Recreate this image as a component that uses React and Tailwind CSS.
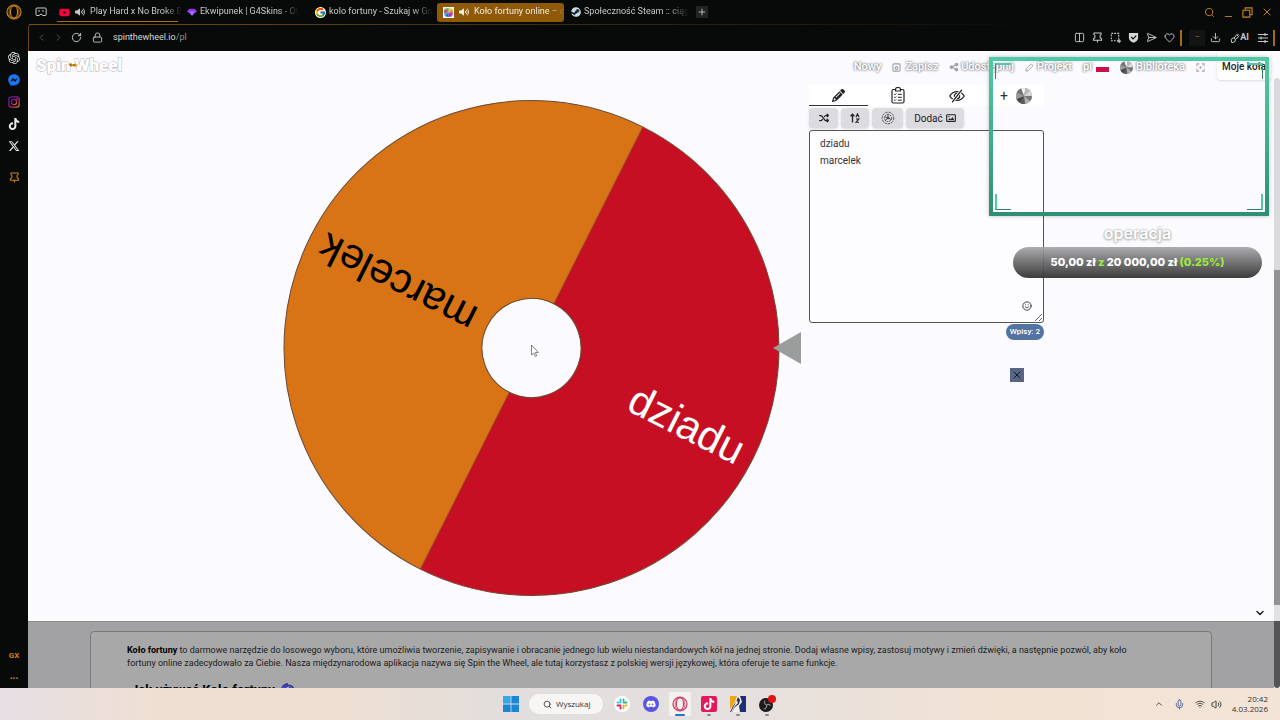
import React, { useState } from 'react';
import {
  Heart,
  Download,
  Search,
  X,
  Minus,
  Plus,
  Lock,
  RotateCw,
  ChevronLeft,
  ChevronRight,
  ChevronUp,
  ChevronDown,
  Columns2,
  Mic,
  Wifi,
  Volume2,
  SendHorizontal,
  Smile,
} from 'lucide-react';
import { FaTiktok, FaXTwitter, FaDiscord, FaSteam, FaYoutube, FaFacebookMessenger, FaPencil, FaShuffle, FaVolumeHigh, FaShareNodes } from 'react-icons/fa6';
import { SiOpenai } from 'react-icons/si';
import { FcGoogle } from 'react-icons/fc';

const OperaRing = ({ className }) => (
  <svg viewBox="0 0 16 16" className={className} fill="none" stroke="currentColor">
    <circle cx="8" cy="8" r="7" strokeWidth="1.2" />
    <ellipse cx="8" cy="8" rx="3.6" ry="6" strokeWidth="1.2" />
    <ellipse cx="8" cy="8" rx="5" ry="6.8" strokeWidth="0.7" />
  </svg>
);

const GxCorner = () => (
  <svg viewBox="0 0 12 10" className="w-3 h-2.5" fill="none" stroke="#c8c8c8" strokeWidth="1">
    <path d="M2 1h8.200a1 1 0 0 1 1 1v5.500a1 1 0 0 1-1 1H8L6 7 4 8.500H2a1 1 0 0 1-1-1V2a1 1 0 0 1 1-1z" />
    <path d="M3 4h2M7 4h2" />
  </svg>
);

const PinIcon = ({ className }) => (
  <svg viewBox="0 0 12 12" className={className} fill="none" stroke="currentColor" strokeWidth="1.1" strokeLinejoin="round">
    <path d="M2 1h8v1.500L8.800 4v2L10.500 7.500V9h-9V7.500L3.200 6V4L2 2.500zM6 9v2.500" />
  </svg>
);

const ShieldIcon = () => (
  <svg viewBox="0 0 12 12" className="w-[11px] h-[11px]">
    <path d="M1 1h10v5.500c0 2.500-2.500 4.200-5 5.200C3.500 10.700 1 9 1 6.500z" fill="#d6d6d6" />
    <path d="M3.500 5.500l2 2 3.500-3.500" fill="none" stroke="#080a0a" strokeWidth="1.300" />
  </svg>
);

const SnapshotIcon = () => (
  <svg viewBox="0 0 12 12" className="w-[11px] h-[11px]" fill="none" stroke="currentColor" strokeWidth="1.200">
    <path d="M1.500 1.500h8v8h-8z" strokeDasharray="2 1.200" />
    <path d="M8 10h4M10 8v4" />
  </svg>
);

const InstagramIcon = () => (
  <svg viewBox="0 0 14 14" className="w-3 h-3" fill="none" stroke="url(#ig)" strokeWidth="1.400">
    <defs>
      <linearGradient id="ig" x1="0" y1="0" x2="1" y2="1">
        <stop offset="0" stopColor="#5a1fa8" />
        <stop offset="0.6" stopColor="#b01a6a" />
        <stop offset="1" stopColor="#d08a20" />
      </linearGradient>
    </defs>
    <rect x="1" y="1" width="12" height="12" rx="3" />
    <circle cx="7" cy="7" r="3" />
    <circle cx="10.300" cy="3.700" r="0.400" />
  </svg>
);

const GemIcon = () => (
  <svg viewBox="0 0 12 10" className="w-2.5 h-2.5">
    <path d="M0 4l3-3h6l3 3-6 5.500z" fill="#8b3df0" />
    <path d="M3 4h6L6 9.500z" fill="#b06bff" />
  </svg>
);

const PinwheelFavicon = () => (
  <svg viewBox="0 0 12 12" className="w-[11px] h-[11px]">
    <rect width="12" height="12" fill="#fff" />
    <path d="M6 6V1l4 1z" fill="#f6c915" />
    <path d="M6 6l4-4 1 4z" fill="#f58a1f" />
    <path d="M6 6h5l-1 4z" fill="#e0218a" />
    <path d="M6 6l4 4-4 1z" fill="#7b2fd0" />
    <path d="M6 6v5l-4-1z" fill="#2a5be0" />
    <path d="M6 6l-4 4-1-4z" fill="#19a7d8" />
    <path d="M6 6H1l1-4z" fill="#e8234a" />
    <path d="M6 6L2 2l4-1z" fill="#3fb84a" />
  </svg>
);

const MiniWheel = ({ className }) => (
  <svg viewBox="0 0 16 16" className={className}>
    <circle cx="8" cy="8" r="8" fill="#8d8d8d" />
    <path d="M8 8L5 .6A8 8 0 0 1 9.500.200z" fill="#f4f4f4" />
    <path d="M8 8L9.500.200a8 8 0 0 1 4.500 2.500z" fill="#b9b9b9" />
    <path d="M8 8l6-5.300a8 8 0 0 1 2 5z" fill="#dcdcdc" />
    <path d="M8 8h8a8 8 0 0 1-2 5.300z" fill="#777" />
    <path d="M8 8l6 5.300A8 8 0 0 1 9 16z" fill="#b0b0b0" />
    <path d="M8 8l1 8a8 8 0 0 1-5-1z" fill="#5c5c5c" />
    <path d="M8 8l-4 7a8 8 0 0 1-3.500-4z" fill="#444" />
    <path d="M8 8L.5 11A8 8 0 0 1 .8 4.500z" fill="#9a9a9a" />
    <path d="M8 8L.8 4.500A8 8 0 0 1 5 .6z" fill="#737373" />
  </svg>
);

const ClipboardList = () => (
  <svg viewBox="0 0 14 17" className="w-3.5 h-[17px]" fill="none" stroke="#222" strokeWidth="1.200">
    <rect x="1" y="2.500" width="12" height="13.500" rx="1.500" />
    <path d="M4.500 4V2.500a2.500 2 0 0 1 5 0V4z" fill="#fff" />
    <path d="M3.200 7l.8.8 1.200-1.300M3.200 10l.8.8 1.200-1.300M3.200 13l.8.6 1.200-1.200M6.800 7.300h4M6.800 10.300h4M6.800 13.200h4" strokeWidth="1" />
  </svg>
);

const EyeSlash = () => (
  <svg viewBox="0 0 16 14" className="w-4 h-3.5" fill="none" stroke="#222" strokeWidth="1.300" strokeLinecap="round">
    <path d="M.8 7C2.500 4 5 2.600 8 2.600S13.500 4 15.200 7C13.500 10 11 11.400 8 11.400S2.500 10 .8 7z" />
    <circle cx="8" cy="7" r="2.600" />
    <path d="M3.500 12.800L12.500 1.200" stroke="#fff" strokeWidth="3" />
    <path d="M3.500 12.800L12.500 1.200" />
  </svg>
);

const SortIcon = () => (
  <svg viewBox="0 0 10 10" className="w-2.5 h-2.5" fill="none" stroke="#222" strokeWidth="1.300">
    <path d="M2.500 9.500V1.500M.6 3.200l1.900-2 1.900 2" />
    <path d="M6 4.200L7.500.8 9 4.200M6 6h3L6 9.200h3" strokeWidth="1.100" />
  </svg>
);

const SpiralIcon = () => (
  <svg viewBox="0 0 14 14" className="w-3.5 h-3.5" fill="none" stroke="#444" strokeWidth="0.900">
    <circle cx="7" cy="7" r="5.800" strokeDasharray="2.400 1" />
    <circle cx="7" cy="7" r="3.600" strokeDasharray="1.800 0.800" />
    <path d="M7 7V3M7 7l3.500 1.500M7 7l-3 2.500M7 7L3.500 5.500" />
    <circle cx="7" cy="7" r="1" fill="#444" />
  </svg>
);

const ImageIcon = () => (
  <svg viewBox="0 0 12 10" className="w-2.5 h-2.5" fill="none" stroke="#222" strokeWidth="1.300">
    <rect x="0.800" y="1" width="10.400" height="8" rx="0.800" />
    <path d="M2.500 7.500l2-2.300 1.300 1.200 2-2.600 2 3.700z" fill="#222" stroke="none" />
    <circle cx="3.500" cy="3.400" r="0.800" fill="#222" stroke="none" />
  </svg>
);

const SlackIcon = () => (
  <svg viewBox="0 0 16 16" className="w-4 h-4">
    <circle cx="8" cy="8" r="8" fill="#fff" />
    <g fill="none" strokeWidth="1.900" strokeLinecap="round">
      <path d="M6.500 3.500v3M3.500 6.500h1" stroke="#36c5f0" />
      <path d="M9.500 6.500h3M9.500 3.500v1" stroke="#2eb67d" />
      <path d="M9.500 9.500v3M11.500 9.500h1" stroke="#ecb22e" />
      <path d="M3.500 9.500h3M6.500 11.500v1" stroke="#e01e5a" />
    </g>
  </svg>
);

const AnvilIcon = () => (
  <svg viewBox="0 0 16 16" className="w-4 h-4">
    <rect width="16" height="16" fill="#f4efe6" />
    <path d="M0 0h7L5 6l-4 6-1 1z" fill="#e8a818" />
    <path d="M10 0h6v16h-6l-1-6 3-4z" fill="#1e2f7a" />
    <path d="M8 1l2 3-1 4-4 3-3 5H0l3-6 3-4z" fill="#26264a" />
    <path d="M7 4l1 3-3 3-3 6H1l3-6z" fill="#f4efe6" />
  </svg>
);

const ObsIcon = () => (
  <svg viewBox="0 0 16 16" className="w-4 h-4 overflow-visible">
    <circle cx="7" cy="9" r="7" fill="#1c1a1b" />
    <g fill="none" stroke="#8a8788" strokeWidth="1.200">
      <path d="M6 4.500a3 3 0 0 0 1.500 4.500M11.500 9.500a3 3 0 0 0-4-.5M4.500 13a3 3 0 0 0 3-4" />
    </g>
    <circle cx="13" cy="3" r="4" fill="#e01212" />
  </svg>
);

const tabs = [
  { id: 1, label: 'Play Hard x No Broke B', icon: <FaYoutube className="w-[11px] h-[11px] text-[#f0063a]" />, audio: true, underlined: true },
  { id: 2, label: 'Ekwipunek | G4Skins - Ot', icon: <GemIcon /> },
  { id: 3, label: 'kolo fortuny - Szukaj w Go', icon: <FcGoogle className="w-[11px] h-[11px] rounded-full bg-white" /> },
  { id: 4, label: 'Koło fortuny online – d', icon: <PinwheelFavicon />, audio: true, active: true },
  { id: 5, label: 'Społeczność Steam :: ciąg', icon: <FaSteam className="w-2.5 h-2.5 text-[#c5dcec]" /> },
];

const TabBar = () => (
  <div className="h-6 shrink-0 flex items-center pl-[7px]">
    <GxCorner />
    <div className="flex items-center gap-px h-full ml-1.5">
      {tabs.map((tab) => (
        <button
          key={tab.id}
          className={`relative flex items-center gap-[3px] w-[127px] h-[19px] px-1.5 rounded-[3px] text-[9px] whitespace-nowrap ${
            tab.active ? 'bg-[#8f5a08] text-[#f3ece0]' : 'text-[#c9c9c9]'
          }`}
        >
          <span className="shrink-0">{tab.icon}</span>
          {tab.audio && <FaVolumeHigh className="w-2.5 h-2.5 mx-0.5 shrink-0" />}
          <span className="[mask-image:linear-gradient(to_right,black_80%,transparent)]">{tab.label}</span>
          {tab.underlined && <span className="absolute left-1 right-0.5 bottom-0 h-px bg-[#a86c18]" />}
        </button>
      ))}
    </div>
    <button className="ml-1 w-3 h-3 bg-[#222424] flex items-center justify-center" aria-label="Nowa karta">
      <Plus className="w-2.5 h-2.5 text-[#d0d0d0]" />
    </button>
    <div className="ml-auto flex items-center gap-2 pr-[7px] text-[#c98519]">
      <button aria-label="Szukaj"><Search className="w-[11px] h-[11px]" /></button>
      <button aria-label="Minimalizuj"><Minus className="w-[11px] h-[11px] mt-2" /></button>
      <button aria-label="Przywróć">
        <svg viewBox="0 0 12 12" className="w-[11px] h-[11px]" fill="none" stroke="currentColor" strokeWidth="1.200">
          <path d="M1 3.500h7.500V11H1zM3.500 3.500V1H11v7.500H8.500" />
        </svg>
      </button>
      <button aria-label="Zamknij"><X className="w-3 h-3" /></button>
    </div>
  </div>
);

const AddressBar = () => (
  <div className="relative h-[27px] shrink-0 flex items-center pl-[7px] rounded-tl-sm border-l border-[#6b4714]">
    <div className="absolute top-0 left-0 right-0 h-px bg-linear-to-r from-[#7a5014] to-transparent to-80%" />
    <div className="flex items-center gap-1.5 text-[#555]">
      <ChevronLeft className="w-[11px] h-[11px]" />
      <ChevronRight className="w-[11px] h-[11px]" />
      <RotateCw className="w-[11px] h-[11px] ml-px text-[#d0d0d0]" />
      <Lock className="w-[11px] h-[11px] ml-1 text-[#c0c0c0]" />
    </div>
    <span className="ml-2.5 text-[9px] text-[#d8d8d8]">
      spinthewheel.io<span className="text-[#8f8f8f]">/pl</span>
    </span>
    <div className="ml-auto flex items-center gap-[7px] text-[#c8c8c8]">
      <Columns2 className="w-[11px] h-[11px]" />
      <PinIcon className="w-[11px] h-[11px]" />
      <SnapshotIcon />
      <ShieldIcon />
      <SendHorizontal className="w-[11px] h-[11px]" />
      <Heart className="w-[11px] h-[11px]" />
      <span className="w-0.5 h-4 -ml-0.5 bg-[#a86c18]" />
      <span className="w-4 h-4 bg-[#111314] text-[#c98519] text-[7px] flex items-center justify-center">--</span>
      <Download className="w-[11px] h-[11px] -ml-0.5" />
      <span className="flex items-center ml-0.5 text-[9px] font-bold">
        <svg viewBox="0 0 12 12" className="w-2.5 h-2.5" fill="none" stroke="currentColor" strokeWidth="1.200">
          <path d="M1.500 8a2.500 2.500 0 1 1 3 3l-2.500.5zM5 6l3-4 2.500 2.500-4 3M9 1l2 2" />
        </svg>
        AI
      </span>
      <svg viewBox="0 0 10 10" className="w-2.5 h-2.5 ml-0.5" fill="none" stroke="currentColor" strokeWidth="1.100">
        <path d="M0 1.500h10M0 5h10M0 8.500h10M7 0v3M3 3.500v3M7 7v3" />
      </svg>
      <span className="w-0.5 h-4 mr-[5px] -ml-0.5 bg-[#a86c18]" />
    </div>
  </div>
);

const SideBar = () => (
  <aside className="w-7 shrink-0 flex flex-col items-center pt-1 pb-1">
    <OperaRing className="w-4 h-4 text-[#c98519]" />
    <div className="flex flex-col items-center gap-2.5 mt-8 text-[#e8e8e8]">
      <SiOpenai className="w-3 h-3" />
      <FaFacebookMessenger className="w-3 h-3 text-[#1877f2]" />
      <InstagramIcon />
      <FaTiktok className="w-3 h-3" />
      <FaXTwitter className="w-3 h-3" />
      <PinIcon className="w-[11px] h-[11px] mt-2.5 text-[#c98519]" />
    </div>
    <span className="mt-auto text-[8px] font-bold leading-4 text-[#c98519]">GX</span>
    <span className="text-[10px] font-bold leading-4 mt-1 text-[#c98519]">...</span>
  </aside>
);

const SiteHeader = () => (
  <header className="h-[34px] shrink-0 flex items-start pl-2">
    <a
      href="#"
      className="relative mt-0.5 text-[17px] leading-6 font-black text-white [paint-order:stroke_fill] [-webkit-text-stroke:1px_#b4b4b8]"
    >
      Spin Wheel
      <svg viewBox="0 0 10 5" className="absolute left-8 top-2.5 w-2.5 h-[5px]">
        <path d="M0 1l3-1 2 1.500 2-1 3 1.500-3 2-2-1-2 1z" fill="#d99a1e" />
        <path d="M2 2h1.500M5 2h1.500" stroke="#4a3510" strokeWidth="1" />
      </svg>
    </a>
    <nav className="ml-auto mt-1 mr-3 h-6 flex items-center gap-[11px] text-[11px] font-medium text-white [text-shadow:0_0_2px_#777,0_0_3px_#888]">
      <a href="#">Nowy</a>
      <a href="#" className="flex items-center gap-1">
        <svg viewBox="0 0 10 10" className="w-[9px] h-[9px]" fill="none" stroke="#a0a0a4" strokeWidth="1.200">
          <rect x="1" y="1" width="8" height="8" rx="1" />
          <circle cx="5" cy="5.500" r="1.500" />
        </svg>
        Zapisz
      </a>
      <a href="#" className="flex items-center gap-0.5">
        <FaShareNodes className="w-2.5 h-2.5 text-[#a0a0a4]" />
        Udostępnij
      </a>
      <a href="#" className="flex items-center gap-[3px]">
        <svg viewBox="0 0 10 10" className="w-[9px] h-[9px]" fill="#fff" stroke="#a0a0a4" strokeWidth="1.100">
          <path d="M1 9l.6-2.700L7 1l2 2-5.300 5.400z" />
        </svg>
        Projekt
      </a>
      <a href="#" className="flex items-center gap-1">
        pl
        <span className="w-[13px] h-2.5 flex flex-col">
          <span className="flex-1 bg-white" />
          <span className="flex-1 bg-[#c8104a]" />
        </span>
      </a>
      <a href="#" className="flex items-center gap-[3px]">
        <MiniWheel className="w-[13px] h-[13px]" />
        Biblioteka
      </a>
      <svg viewBox="0 0 10 10" className="w-[9px] h-[9px]" fill="none" stroke="#a8a8ac" strokeWidth="1.200">
        <path d="M1 3.500V1h2.500M6.500 1H9v2.500M9 6.500V9H6.500M3.500 9H1V6.500M3.500 5h3M5 3.500v3" />
      </svg>
    </nav>
    <button className="w-[54px] h-[29px] mr-[3px] pt-[3px] rounded-sm bg-white text-[10px] leading-6 font-medium text-[#222] whitespace-nowrap shadow">
      Moje koła
    </button>
  </header>
);

// everything on the wheel is measured from its centre
const Wheel = () => (
  <svg viewBox="0 0 520 500" className="w-[520px] h-[500px] shrink-0">
    <g transform="translate(248.500 250) rotate(26.700)">
      <path d="M0-247.500A247.500 247.500 0 0 1 0 247.500z" fill="#c70f24" />
      <path d="M0 247.500A247.500 247.500 0 0 1 0-247.500z" fill="#d97416" />
      <path d="M0-247.500V247.500" stroke="#8a4a1c" strokeWidth="0.800" />
      <circle r="247.500" fill="none" stroke="#6b4a32" strokeWidth="1" />
      <text x="235" y="13" textAnchor="end" fill="#fff" fontSize="42" fontFamily="Liberation Sans, Arial, sans-serif">dziadu</text>
      <text x="234" y="12" textAnchor="end" fill="#000" fontSize="42" fontFamily="Liberation Sans, Arial, sans-serif" transform="rotate(180)">marcelek</text>
      <circle r="49.500" fill="#fafaff" stroke="#6b4a32" strokeWidth="1" />
    </g>
    <path d="M490 250l28-16v32z" fill="#9b9d9d" />
    <path d="M248.500 247v10l2.300-2 1.500 3.500 1.500-.7-1.500-3.300h3z" fill="#fff" stroke="#666" strokeWidth="0.800" />
  </svg>
);

const EntriesPanel = () => {
  const [entries, setEntries] = useState('dziadu\nmarcelek');

  return (
    <section className="w-[235px] shrink-0 flex flex-col">
      <div className="flex h-[21px] bg-white">
        <button className="w-[59px] flex items-center justify-center border-b border-[#333]" aria-label="Wpisy">
          <FaPencil className="w-[13px] h-[13px] text-[#222]" />
        </button>
        <button className="w-[59px] flex items-center justify-center" aria-label="Wyniki">
          <ClipboardList />
        </button>
        <button className="w-[59px] flex items-center justify-center" aria-label="Ukryj">
          <EyeSlash />
        </button>
        <button className="w-5 ml-2 flex items-center justify-center text-[14px] leading-5 text-[#333]" aria-label="Dodaj koło">+</button>
        <MiniWheel className="w-4 h-4 mt-[3px] ml-0.5" />
      </div>
      <div className="flex gap-[3px] h-5 mt-0.5 text-[10px] text-[#222]">
        <button className="w-[29px] flex items-center justify-center rounded-sm bg-[#dcdce0] shadow-sm" aria-label="Przetasuj">
          <FaShuffle className="w-2.5 h-2.5" />
        </button>
        <button className="w-7 flex items-center justify-center rounded-sm bg-[#dcdce0] shadow-sm" aria-label="Sortuj">
          <SortIcon />
        </button>
        <button className="w-[31px] flex items-center justify-center rounded-sm bg-[#dcdce0] shadow-sm" aria-label="Efekty">
          <SpiralIcon />
        </button>
        <button className="w-[58px] flex items-center justify-center gap-[3px] rounded-sm bg-[#dcdce0] shadow-sm">
          Dodać
          <ImageIcon />
        </button>
      </div>
      <div className="relative mt-0.5">
        <textarea
          aria-label="Lista wpisów"
          spellCheck="false"
          value={entries}
          onChange={(e) => setEntries(e.target.value)}
          className="block w-full h-[193px] px-2.5 py-1 rounded-[3px] border border-[#555] bg-[#fdfdff] text-[10px] leading-[17px] text-[#333] outline-none"
        />
        <button className="absolute right-3 bottom-3 text-[#222]" aria-label="Emoji">
          <Smile className="block w-2.5 h-2.5" />
        </button>
      </div>
      <span className="self-end mt-px h-4 px-1 rounded-full bg-[#5473a3] text-[8px] leading-4 font-medium text-white">
        Wpisy: {entries.split('\n').length}
      </span>
      <button className="self-end mt-7 mr-5 w-3.5 h-3.5 bg-[#566683] flex items-center justify-center" aria-label="Zamknij reklamę">
        <X className="w-3 h-3 text-[#101828]" />
      </button>
    </section>
  );
};

// stream overlay: camera frame and the donation goal
const StreamOverlay = () => (
  <>
    <div className="absolute right-[11px] top-1.5 w-[280px] h-[159px] border-4 [border-image:linear-gradient(#4fcaa6,#3fae8e,#2f8f75)_1] shadow-[0_0_4px_rgba(0,0,0,0.25)] pointer-events-none">
      <span className="absolute left-0.5 top-0.5 w-4 h-4 border-l border-t-2 border-l-[#2f8169] border-t-[#4fcaa6]" />
      <span className="absolute right-0.5 top-0.5 w-4 h-4 border-r border-t-2 border-r-[#2f8169] border-t-[#4fcaa6]" />
      <span className="absolute left-0.5 bottom-0.5 w-4 h-4 border-l-2 border-b border-l-[#4fcaa6] border-b-[#2f8169]" />
      <span className="absolute right-0.5 bottom-0.5 w-4 h-4 border-r-2 border-b border-r-[#4fcaa6] border-b-[#2f8169]" />
    </div>
    <div className="absolute right-[18px] top-[172px] w-[249px] flex flex-col text-center font-['Inter',sans-serif]">
      <span className="text-[16px] leading-5 font-semibold text-white [text-shadow:0_0_2px_#999,0_1px_3px_#aaa]">operacja</span>
      <div className="mt-1 h-[31px] rounded-full bg-linear-to-b from-[#a5a5a7]/90 to-[#333]/95 text-[11px] leading-[31px] font-extrabold text-white whitespace-nowrap">
        50,00 zł <span className="text-[#9be93a]">z</span> 20 000,00 zł <span className="text-[#9be93a]">(0.25%)</span>
      </div>
    </div>
  </>
);

const Article = () => (
  <article className="h-[67px] shrink-0 overflow-hidden bg-[#a2a2a4] border-t border-[#8c8c8e] pt-[9px] pl-[62px] pr-[62px]">
    <div className="h-24 rounded-sm border border-[#7a7a7a] bg-[#a8a8a8] pl-9 pr-16 pt-3 text-[9px] leading-[13px] text-[#1c1c1c]">
      <p>
        <b className="text-black">Koło fortuny</b> to darmowe narzędzie do losowego wyboru, które umożliwia tworzenie, zapisywanie i obracanie jednego lub wielu niestandardowych kół na jednej stronie. Dodaj własne wpisy, zastosuj motywy i zmień dźwięki, a następnie pozwól, aby koło fortuny online zadecydowało za Ciebie. Nasza międzynarodowa aplikacja nazywa się Spin the Wheel, ale tutaj korzystasz z polskiej wersji językowej, która oferuje te same funkcje.
      </p>
      <h2 className="mt-3 pl-1 flex items-center gap-1.5 text-[13px] leading-4 font-bold text-black">
        Jak używać Koło fortuny
        <svg viewBox="0 0 14 14" className="w-3.5 h-3.5" fill="none" stroke="#3a36b0" strokeWidth="2">
          <path d="M1 7a6 6 0 0 1 6-6M12.500 7a4.500 4.500 0 1 0-4.500 4.500M8 5a2 2 0 1 1 0 4" />
        </svg>
      </h2>
    </div>
  </article>
);

const Taskbar = () => (
  <footer className="h-8 shrink-0 grid grid-cols-[1fr_auto_1fr] items-center bg-[linear-gradient(to_right,#e6dfe4,#efdfd3_12%,#eeded2_26%,#e2dedd_40%,#e4e0df_56%,#f2e2d4_78%,#f3e4d8)] font-['Open_Sans',sans-serif]">
    <span />
    <div className="flex items-center h-full pl-1">
      <svg viewBox="0 0 16 16" className="w-4 h-4" fill="#1a86d4">
        <path d="M0 0h7.600v7.600H0z" fill="#35a8e6" />
        <path d="M8.400 0H16v7.600H8.400zM0 8.400h7.600V16H0zM8.400 8.400H16V16H8.400z" />
      </svg>
      <label className="flex items-center gap-1 ml-2.5 mr-1 pl-3.5 w-[74px] h-5 rounded-full bg-[#f8f6f5] text-[#222]">
        <Search className="w-[9px] h-[9px] shrink-0" />
        <input type="text" placeholder="Wyszukaj" aria-label="Wyszukaj" className="w-full min-w-0 bg-transparent text-[8px] leading-4 placeholder:text-[#333] outline-none" />
      </label>
      {[
        { id: 'slack', icon: <SlackIcon /> },
        { id: 'discord', icon: <span className="w-4 h-4 rounded-full bg-[#5a55e0] flex items-center justify-center"><FaDiscord className="w-2.5 h-2.5 text-white" /></span> },
        { id: 'opera', icon: <OperaRing className="w-4 h-4 text-[#c93a62]" />, focused: true },
        { id: 'tiktok', icon: <span className="w-4 h-4 rounded-xs bg-[#e5185a] flex items-center justify-center"><FaTiktok className="w-3 h-3 text-white" /></span>, open: true },
        { id: 'anvil', icon: <AnvilIcon />, open: true },
        { id: 'obs', icon: <ObsIcon />, open: true },
      ].map((app) => (
        <button key={app.id} aria-label={app.id} className="relative w-[29px] h-full flex items-center justify-center">
          <span className={app.focused ? 'px-[3px] py-1 rounded-xs bg-[#f4f1f1]' : ''}>{app.icon}</span>
          {app.focused && <span className="absolute bottom-1 w-2.5 h-0.5 rounded-full bg-[#1a78c8]" />}
          {app.open && <span className="absolute bottom-1 w-1 h-0.5 rounded-full bg-[#888]" />}
        </button>
      ))}
    </div>
    <div className="flex items-center justify-end pr-3 text-[#333]">
      <ChevronUp className="w-2.5 h-2.5" />
      <Mic className="w-[11px] h-[11px] ml-2.5 text-[#4a5a9a]" />
      <Wifi className="w-2.5 h-2.5 ml-2.5" />
      <Volume2 className="w-[11px] h-[11px] ml-1.5" />
      <div className="ml-2.5 text-[8px] leading-[10px] text-right">
        <div>20:42</div>
        <div>4.03.2026</div>
      </div>
    </div>
  </footer>
);

const App = () => {
  return (
    <div className="h-screen flex flex-col overflow-hidden bg-[#080a0a] font-['Roboto',sans-serif]">
      <div className="flex-1 min-h-0 flex">
        <SideBar />
        <div className="flex-1 min-w-0 flex flex-col">
          <TabBar />
          <AddressBar />
          <div className="relative flex-1 min-h-0 flex">
            <main className="flex-1 min-w-0 flex flex-col bg-[#fafaff]">
              <div className="flex-1 min-h-0 flex flex-col">
                <SiteHeader />
                <div className="flex">
                  <div className="flex-1 flex justify-end pt-[13px] pr-1.5">
                    <Wheel />
                  </div>
                  <EntriesPanel />
                  <div className="w-[230px] shrink-0" />
                </div>
                <button className="mt-auto self-end mr-2 mb-0.5" aria-label="Przewiń w dół">
                  <ChevronDown className="block w-3 h-3 text-[#222]" strokeWidth={3} />
                </button>
              </div>
              <Article />
            </main>
            <div className="w-1.5 shrink-0 flex flex-col bg-[#fafaff]">
              <div className="h-[27px]" />
              <div className="h-48 bg-[#dadadc] rounded-t-full" />
              <div className="flex-1 bg-[#929295]" />
              <div className="h-4 bg-[#e2e2e4]" />
              <div className="h-[67px] bg-[#555559] rounded-b-full" />
            </div>
            <StreamOverlay />
          </div>
        </div>
      </div>
      <Taskbar />
    </div>
  );
};

export default App;
